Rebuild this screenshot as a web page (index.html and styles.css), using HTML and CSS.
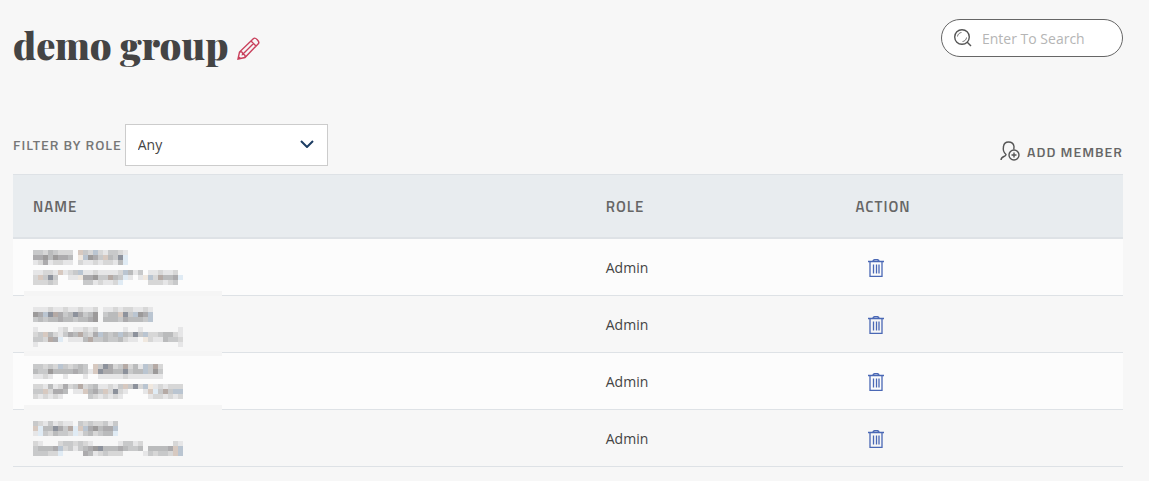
FILE: index.html
```
<!DOCTYPE html>
<html lang="en">
  <head>
    <meta charset="utf-8">
    <title>demo group</title>
    <link rel="stylesheet" href="styles.css">
  </head>
  <body>
    <!-- Shared icons -->
    <svg class="sprite" aria-hidden="true">
      <symbol id="trash" viewBox="0 0 16 18">
        <path d="M0 2.500h16M2 3v14.500h12V3M5 2c0-2 6-2 6 0M5.500 5.500v9M8.500 5.500v9M11 5.500v9"/>
      </symbol>
    </svg>

    <header class="page-header">
      <h1>demo group</h1>
      <button class="edit" type="button" aria-label="Edit group name">
        <svg viewBox="0 0 24 24" width="24" height="24">
          <path d="M2 22l1.5-7L17.300 1.700c2-2 7 3 5 5L9 20.500zM15 4l5 5M4 15c2-1 3 1 2.500 2.500C8.500 17 10 19 8.500 20.500M6.500 17.500L17.500 6.500M2.200 19.500l2 2"/>
        </svg>
      </button>
      <form class="search">
        <svg viewBox="0 0 18 18" width="18" height="18">
          <circle cx="8" cy="8" r="7.300"/>
          <path d="M13 13l4 4"/>
          <path class="thin" d="M3.500 7.500c0-2 2-4 4-4M12.500 8.500c0 2-2 4-4 4"/>
        </svg>
        <input type="search" aria-label="Search members" placeholder="Enter To Search">
      </form>
    </header>

    <main>
      <div class="toolbar">
        <label for="role">Filter by role</label>
        <div class="select">
          <select id="role">
            <option>Any</option>
            <option>Admin</option>
          </select>
          <svg viewBox="0 0 14 8" width="14" height="8"><path d="M1 1l6 6 6-6"/></svg>
        </div>
        <button class="add" type="button">
          <svg viewBox="0 0 20 20" width="20" height="20">
            <path d="M1 19c0-4 5-3 5-5.500C3 11 3 8 3.500 5.500 4 2 6 1 8.500 1s5 1 5.500 4.500c0 1 0 2-.3 3"/>
            <circle cx="14" cy="14" r="5"/>
            <path d="M11.500 14h5M14 11.500v5"/>
          </svg>
          Add member
        </button>
      </div>

      <table class="members">
        <thead>
          <tr>
            <th class="name">Name</th>
            <th class="role">Role</th>
            <th>Action</th>
          </tr>
        </thead>
        <tbody>
          <tr>
            <td><div class="masked" data-cells="ccbdcbbb.pcbsbaccba
eefdfeed.osfecpdcgl
abeabbaa.baababbadl

aabbapabcsaabaaaabsdac.aabaab
bpcgc..aaoeefcctdcla.aosbtddel
bbbcb.....ccabaabl.....bbbabc"></div></td>
            <td>Admin</td>
            <td><button class="delete" type="button" aria-label="Delete member"><svg><use href="#trash"/></svg></button></td>
          </tr>
          <tr>
            <td><div class="masked" data-cells="aaabaabaabaab.aababbaaba
fesgtecdgecdf.cddpgcsfes
cdcddeddcddef.dddcedddcs

a....ab.aabab.....a..a.......a
bcpdbacedtcbesdcdsdcgcsbbcddba
ccbtel.aaadtccdccdbaa.obaadccb
a............................a"></div></td>
            <td>Admin</td>
            <td><button class="delete" type="button" aria-label="Delete member"><svg><use href="#trash"/></svg></button></td>
          </tr>
          <tr>
            <td><div class="masked" data-cells="ccbcbscbcdc.pcgebctbdasctb
dccfddddedcapgeeddgcddscfc
aaba..a...a..aaaaabaaaaaaa

bbadabebctbcdaabacpcgbsoababbb
ccpbeed.aapdecpbgba...aplctcss
bababa.....cbababa.....abbabab"></div></td>
            <td>Admin</td>
            <td><button class="delete" type="button" aria-label="Delete member"><svg><use href="#trash"/></svg></button></td>
          </tr>
          <tr>
            <td><div class="masked" data-cells="cbacabaa.cbcbbcac
plddgectlpsefdees
alcbdccblacdbcddl

ba...bccbcba.....accab......ba
cdddesbcacdefgdddedccd.ddddeps
cccbbl....edabcbbb....acbccbps"></div></td>
            <td>Admin</td>
            <td><button class="delete" type="button" aria-label="Delete member"><svg><use href="#trash"/></svg></button></td>
          </tr>
        </tbody>
      </table>
    </main>
    <script src="masked.js"></script>
  </body>
</html>
```
FILE: styles.css
```
body {
  margin: 0;
  padding: 18px 26px 14px 13px;
  background: #f7f7f7;
  color: #444;
  font: 14px/20px "Open Sans", "Noto Sans", sans-serif;
}
svg {
  fill: none;
  stroke: #555;
}
button {
  padding: 0;
  border: 0;
  background: none;
  cursor: pointer;
}
.sprite {
  position: absolute;
  width: 0;
  height: 0;
}

.page-header {
  display: flex;
  align-items: flex-start;
  margin-bottom: 52px;
}
h1 {
  margin: 0;
  font: 900 38px/54px "Playfair Display", "Liberation Serif", serif;
}
.edit {
  margin: 19px 0 0 8px;
}
.edit svg {
  display: block;
  stroke: #c9405c;
  stroke-width: 1.4;
}
.search {
  display: flex;
  align-items: center;
  box-sizing: border-box;
  width: 182px;
  height: 38px;
  margin: 1px 0 0 auto;
  padding: 0 12px;
  border: 1px solid #666;
  border-radius: 19px;
  background: #fff;
}
.search svg {
  flex: none;
  stroke-width: 1.4;
}
.search .thin {
  stroke-width: 0.8;
}
.search input {
  width: 100%;
  min-width: 0;
  margin-left: 10px;
  padding: 2px 0 0;
  border: 0;
  outline: 0;
  background: none;
  font: inherit;
}
.search input::placeholder {
  color: #b5b5b5;
}

.toolbar {
  display: flex;
  align-items: center;
  gap: 3px;
  margin-bottom: 8px;
}
.toolbar label,
.add,
th {
  color: #666;
  font-family: "Titillium Web", Roboto, sans-serif;
  font-size: 14px;
  font-weight: 600;
  text-transform: uppercase;
  letter-spacing: 1px;
}
.toolbar label {
  color: #777;
}
.select {
  position: relative;
}
.select select {
  width: 203px;
  height: 42px;
  padding: 0 12px;
  border: 1px solid #ccc;
  border-radius: 0;
  background: #fff;
  color: #444;
  font: inherit;
  appearance: none;
}
.select svg {
  position: absolute;
  top: 16px;
  right: 14px;
  stroke: #1c3d63;
  stroke-width: 2;
  pointer-events: none;
}
.add {
  display: flex;
  align-items: center;
  gap: 7px;
  margin: 12px 0 0 auto;
}
.add svg {
  stroke-width: 1.4;
}

.members {
  width: 100%;
  border-spacing: 0;
  table-layout: fixed;
}
th {
  box-sizing: border-box;
  height: 65px;
  padding: 2px 20px 0;
  border-top: 1px solid #dee2e6;
  border-bottom: 2px solid #dee2e6;
  background: #e8ecef;
  font-size: 15px;
  text-align: left;
}
.name {
  width: 51.6%;
}
.role {
  width: 22.5%;
}
td {
  box-sizing: border-box;
  height: 57px;
  padding: 2px 20px 0;
  border-bottom: 1px solid #dee2e6;
}
tbody tr:nth-child(odd) td {
  background: #fcfcfc;
}
.delete {
  display: block;
  margin-left: 12px;
}
.delete svg {
  display: block;
  width: 16px;
  height: 18px;
  stroke: #4a68b5;
  stroke-width: 1.3;
}

/* names and addresses hidden behind 5px blocks */
.masked {
  height: 36px;
}
.masked svg {
  position: relative;
  display: block;
  overflow: visible;
  stroke: none;
  shape-rendering: crispEdges;
}
tr:nth-child(even) td {
  position: relative;
}
tr:nth-child(even) .masked::before {
  content: "";
  position: absolute;
  top: -5px;
  bottom: -4px;
  left: 11px;
  width: 198px;
  border: solid #f5f5f5;
  border-width: 5px 0;
}
tr:last-child .masked::before {
  bottom: 5px;
  border-bottom: 0;
}
```
FILE: masked.js
```
// Draws each masked name as a grid of 5px blocks, one letter per block
var SHADES = {
  a: '#e6e6e7', b: '#d7d7d7', c: '#c8c9ca', d: '#babbbc', e: '#acabad',
  f: '#9c9a9a', g: '#8d929c', t: '#b5aaa5', s: '#bac5d1', l: '#e0ebf4',
  o: '#f0e8df', p: '#d7c9c0'
};
var SIZE = 5;

document.querySelectorAll('.masked').forEach(function (el) {
  var ns = 'http://www.w3.org/2000/svg';
  var svg = document.createElementNS(ns, 'svg');
  svg.setAttribute('width', 150);
  svg.setAttribute('height', 35);
  el.dataset.cells.split('\n').forEach(function (line, y) {
    line.split('').forEach(function (letter, x) {
      if (!SHADES[letter]) return;
      var rect = document.createElementNS(ns, 'rect');
      rect.setAttribute('x', x * SIZE);
      rect.setAttribute('y', y * SIZE);
      rect.setAttribute('width', SIZE);
      rect.setAttribute('height', SIZE);
      rect.setAttribute('fill', SHADES[letter]);
      svg.appendChild(rect);
    });
  });
  el.appendChild(svg);
});
```
